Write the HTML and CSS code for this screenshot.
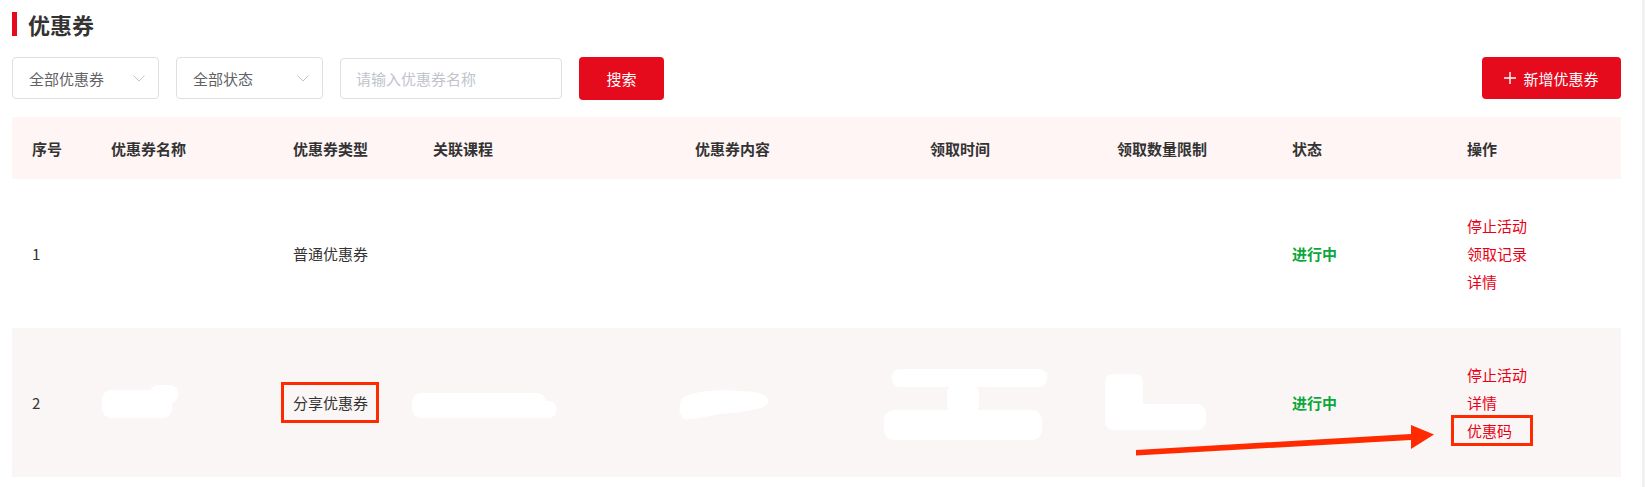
FILE: index.html
```html
<!DOCTYPE html>
<html lang="zh-CN">
<head>
    <meta charset="UTF-8">
    <title>优惠券</title>
    <link rel="stylesheet" href="styles.css">
</head>
<body>
    <div class="page">
        <h2 class="title">优惠券</h2>
        <div class="toolbar">
            <div class="filters">
                <div class="select">
                    <span>全部优惠券</span>
                    <svg width="12" height="7" viewBox="0 0 12 7"><polyline points="0.5,0.5 6,6 11.5,0.5" fill="none" stroke="#c0c4cc" stroke-width="1"/></svg>
                </div>
                <div class="select">
                    <span>全部状态</span>
                    <svg width="12" height="7" viewBox="0 0 12 7"><polyline points="0.5,0.5 6,6 11.5,0.5" fill="none" stroke="#c0c4cc" stroke-width="1"/></svg>
                </div>
                <input class="search-input" type="text" placeholder="请输入优惠券名称">
                <button class="btn btn-search">搜索</button>
            </div>
            <button class="btn btn-add">
                <svg width="12" height="12" viewBox="0 0 12 12"><path d="M6 0v12M0 6h12" stroke="#fff" stroke-width="1.4"/></svg>
                新增优惠券
            </button>
        </div>
        <table class="coupons">
            <colgroup>
                <col style="width:79px"><col style="width:182px"><col style="width:140px">
                <col style="width:262px"><col style="width:235px"><col style="width:187px">
                <col style="width:175px"><col style="width:175px"><col style="width:174px">
            </colgroup>
            <thead>
                <tr>
                    <th>序号</th><th>优惠券名称</th><th>优惠券类型</th><th>关联课程</th><th>优惠券内容</th>
                    <th>领取时间</th><th>领取数量限制</th><th>状态</th><th>操作</th>
                </tr>
            </thead>
            <tbody>
                <tr>
                    <td>1</td><td></td><td>普通优惠券</td><td></td><td></td><td></td><td></td>
                    <td class="on">进行中</td>
                    <td>
                        <div class="ops"><a>停止活动</a><a>领取记录</a><a>详情</a></div>
                    </td>
                </tr>
                <tr class="alt">
                    <td>2</td><td></td><td><span class="mark mark-type">分享优惠券</span></td><td></td><td></td><td></td><td></td>
                    <td class="on">进行中</td>
                    <td>
                        <div class="ops"><a>停止活动</a><a>详情</a><a><span class="mark mark-code">优惠码</span></a></div>
                    </td>
                </tr>
            </tbody>
        </table>
    </div>

    <!-- redaction strokes and the annotation arrow drawn over the screenshot -->
    <svg class="overlay" width="1645" height="487" viewBox="0 0 1645 487">
        <g fill="#fff">
            <rect x="102" y="390" width="70" height="28" rx="9"/>
            <rect x="150" y="385" width="28" height="18" rx="8"/>
            <rect x="412" y="393" width="134" height="25" rx="9"/>
            <rect x="528" y="401" width="28" height="17" rx="7"/>
            <path d="M682 398 Q700 388 740 391 Q771 392 768 403 Q766 410 720 414 Q690 420 684 419 Q676 412 682 398 Z"/>
            <rect x="892" y="369" width="155" height="18" rx="8"/>
            <rect x="947" y="384" width="32" height="30" rx="9"/>
            <rect x="884" y="410" width="158" height="30" rx="10"/>
            <rect x="1105" y="374" width="38" height="56" rx="8"/>
            <rect x="1130" y="404" width="76" height="26" rx="9"/>
        </g>
        <polygon fill="#ff2a00" points="1136,450 1411,434 1411,425 1434,434.5 1411,449 1411,440 1136,455.5"/>
    </svg>
</body>
</html>
```

FILE: styles.css
```css
body {
    margin: 0;
    min-height: 100vh;
    box-sizing: border-box;
    border-right: 3px solid #f1f1f1;
    position: relative;
    font-family: "Noto Sans CJK SC", "Noto Sans", sans-serif;
    color: #333;
    background: #fff;
}
.page {
    padding: 12px 21px 0 12px;
}
.title {
    margin: 0;
    height: 24px;
    line-height: 24px;
    padding-left: 11px;
    border-left: 5px solid #e60a1d;
    font-size: 22px;
    font-weight: bold;
    color: #333;
}
.toolbar {
    display: flex;
    justify-content: space-between;
    align-items: flex-start;
    margin-top: 21px;
}
.filters {
    display: flex;
    align-items: flex-start;
    gap: 17px;
}
.select {
    width: 147px;
    height: 42px;
    box-sizing: border-box;
    padding: 0 13px 0 16px;
    border: 1px solid #dcdfe6;
    border-radius: 4px;
    display: flex;
    align-items: center;
    justify-content: space-between;
    font-size: 15px;
    color: #606266;
}
.search-input {
    width: 222px;
    height: 41px;
    margin-top: 1px;
    box-sizing: border-box;
    padding: 0 15px;
    border: 1px solid #dcdfe6;
    border-radius: 4px;
    font-family: inherit;
    font-size: 15px;
    outline: none;
}
.search-input::placeholder {
    color: #c0c4cc;
}
.btn {
    border: none;
    border-radius: 4px;
    background: #e60a1d;
    color: #fff;
    font-family: inherit;
    font-size: 15px;
    display: flex;
    align-items: center;
    justify-content: center;
    padding: 0;
}
.btn-search {
    width: 85px;
    height: 43px;
}
.btn-add {
    width: 139px;
    height: 42px;
    gap: 7px;
}
.coupons {
    width: 1609px;
    margin-top: 17px;
    border-collapse: collapse;
    table-layout: fixed;
    font-size: 15px;
}
.coupons th {
    height: 62px;
    padding: 0 0 0 20px;
    background: #fff5f5;
    text-align: left;
    font-weight: bold;
    color: #333;
}
.coupons td {
    height: 149px;
    padding: 0 0 0 20px;
    color: #333;
}
.coupons tr.alt td {
    background: #faf6f5;
}
.coupons td.on {
    color: #0aa83a;
    font-weight: bold;
}
.ops {
    display: flex;
    flex-direction: column;
    align-items: flex-start;
    line-height: 28px;
}
.ops a {
    color: #ea0014;
}
.mark {
    display: inline-block;
    border: 3px solid #ff2a00;
    line-height: 18px;
}
.mark-type {
    padding: 9px 8px 8px 9px;
    margin: -12px -11px -11px -12px;
}
.mark-code {
    padding: 4px 18px 3px 13px;
    margin: -7px -21px -6px -16px;
}
.overlay {
    position: absolute;
    top: 0;
    left: 0;
    pointer-events: none;
}
```
